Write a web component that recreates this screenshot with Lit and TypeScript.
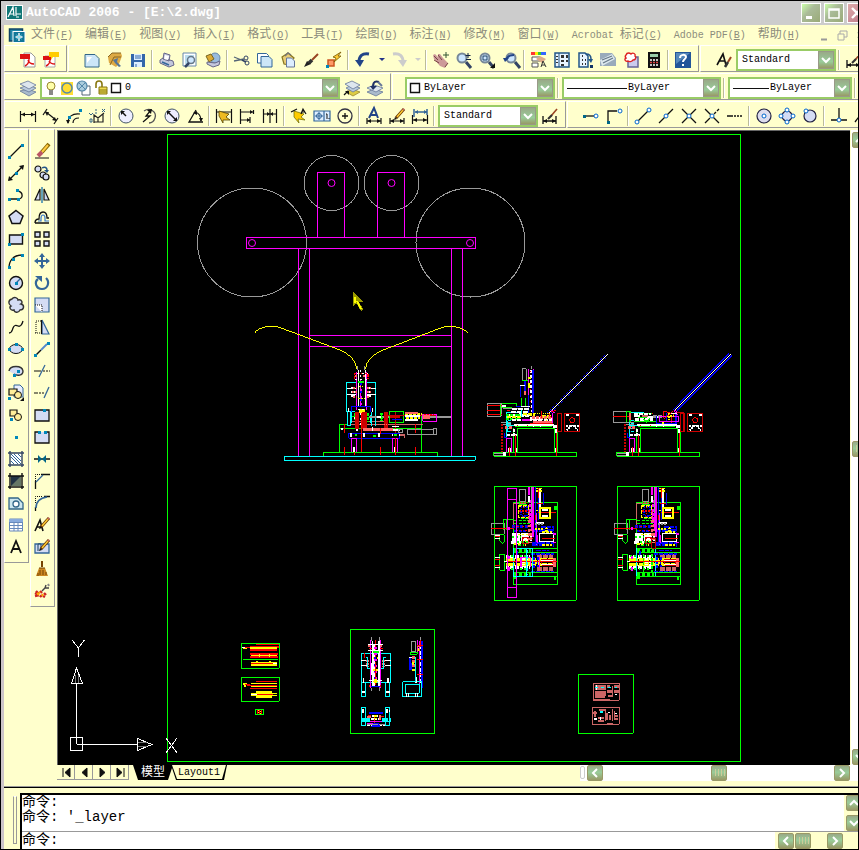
import { LitElement, html, svg, css, nothing } from "lit";
import { customElement } from "lit/decorators.js";

const P = (s: string, d: string, w = 1, f = "none") =>
  svg`<path d=${d} stroke=${s} stroke-width=${w} fill=${f}></path>`;
const F = (f: string, d: string) => svg`<path d=${d} fill=${f} stroke="none"></path>`;
const dot = (x: number, y: number, c = "#0088bb") =>
  svg`<rect x=${x - 1} y=${y - 1} width="3" height="3" fill=${c} stroke="none"></rect>`;
const ring = (x: number, y: number, r: number, s = "#000", f = "none", w = 1) =>
  svg`<circle cx=${x} cy=${y} r=${r} stroke=${s} fill=${f} stroke-width=${w}></circle>`;

const K = "#111";
const B = "#336699";
const G = "#d4dcf4";
const snap = (x: number, y: number) => ring(x, y, 2, "#0066cc", "#fff");
const pencil = [P("#663300", "M15 1L7 10", 3), P("#ffcc33", "M14 2L8 9", 1.5), F("#111", "M5 12l1-3 2 2z"), P("#cc6666", "M14 1l1 1", 2)];
const bolt = [F("#ffcc00", "M3 3l10 3-3 3 4 3-7-1 1 4-5-6z"), P("#666600", "M3 3l10 3-3 3 4 3-7-1 1 4-5-6z", 0.7)];
const lens = (x = 6, y = 6) => [ring(x, y, 4.5, "#778899", "#cce6ff", 2), P("#334466", `M${x + 4} ${y + 4}l5 6`, 3)];
const sheet = F("#cce6f8", "M1 3h10l4 4v8H1z");

const icons: Record<string, unknown> = {
  pdf: [F("#fff", "M2 1h9l4 4v10H4z"), P("#999", "M4 1h7l4 4v10H4z"), F("#dd1111", "M0 2h10v5H0z"), P("#dd1111", "M9 7c0 4-2 6-4 7M8 8c1 3 4 4 6 4", 1.4)],
  pdfmail: [F("#fff", "M2 4h10v11H2z"), P("#aaa", "M2 4h10v11H2z"), F("#dd1111", "M0 4h8v4H0z"), P("#dd1111", "M7 8c0 4-2 5-4 6M6 9c1 2 4 3 6 3", 1.4), F("#ffcc00", "M6 0h10v5h-6l-2 3V5H6z")],
  newdoc: [sheet, P("#336688", "M1 2.500h10l4 4V15H1z", 1), F("#fff", "M3 5h5l-5 6z")],
  open: [F("#ddaa44", "M1 5l4-4h9l1 3-3 8-3 3-7-4z"), P("#886622", "M1 5l4-4h9M3 13l4-8h7", 1), F("#557799", "M6 8l5-2-1 4 4 4-2 1-4-4z")],
  save: [F("#3366aa", "M1 2h14v13H1z"), F("#ddeeff", "M4 2h8v6H4zM4 10h8v5H4z"), P("#3366aa", "M5 4h6M5 6h6M6 12v3", 1)],
  print: [F("#fff", "M5 1l6 2-1 6-6-2z"), P("#666688", "M5 1l6 2-1 6-6-2zM1 8l3-2 10 3 1 4-5 2-9-4z", 1, "#c4c8dd"), P("#336699", "M3 10l7 3", 1.5), F("#fff", "M6 3l4 1-1 4-4-1z")],
  preview: [F("#fff", "M1 1h13v13H1z"), P("#6688aa", "M1 1h13v13H1z"), F("#bbddee", "M3 3h9v9H3z"), ring(9, 8, 3.5, "#667788", "#cce6ff", 1.5), P("#334466", "M7 11l-4 4", 2.5)],
  publish: [ring(10, 6, 5, "#6688aa", "#99bbdd"), F("#ddaa33", "M1 4l5-2 3 5-5 3z"), P("#776622", "M1 4l5-2 3 5-5 3z"), P("#666688", "M2 10l8 1 5-2-1 4-6 2-6-3z", 1, "#c4c8dd")],
  cut: [P("#556677", "M0 5l10 4M0 9l10-2", 1.3), ring(12, 6, 2, "#334466"), ring(13, 11, 2, "#334466"), P("#334466", "M8 8l4 2", 1.5)],
  copy: [P("#336699", "M0.500 1.500h9l2 2V11H0.500z", 1, "#fff"), P("#336699", "M4 4.500h8l3 3V15H4z", 1, "#cce6f8")],
  paste: [P("#887722", "M2 5l6-4 6 5-4 7-6-1z", 1.2, "#e8cc77"), F("#fff", "M7 6h5l3 3v6H7z"), P("#667799", "M6.500 6h5l3 3v6h-8z", 1, "#ddeeff"), P("#777", "M5 4l3-3 3 2", 1.5)],
  brush: [P("#994422", "M15 2L9 8", 2), P("#333", "M9 8l-3 3", 3.5), F("#222", "M1 15l3-6 4 3z")],
  blockedit: [P("#cc5522", "M2 8h6v6H2z", 1.5, "#ff9966"), F("#ffcc33", "M15 0L7 5l3 1-2 4 7-6-3 0z"), P("#775500", "M15 0L7 5l3 1-2 4 7-6-3 0z", 0.8), dot(1, 14)],
  undo: [P("#224488", "M14 2C7 1 4 4 4 10", 3), F("#224488", "M0 8h9l-4 7z")],
  redo: [P("#cccccc", "M2 2c7-1 10 2 10 8", 3), F("#cccccc", "M7 8h9l-4 7z")],
  pan: [F("#cc9999", "M0 3l2-1 3 3 0-3 2 0 3 4 5 5-3 5-5-2-6-7z"), P("#774444", "M1 4l4 4M5 3l4 5M1 8l5 3M12 15l3-4", 1), P("#335533", "M13 0v6M10 3h6", 1)],
  zoomrt: [lens(), P("#112244", "M12 1v5M9.500 3.500h5M10 7.500h5", 1)],
  zoomwin: [lens(), P("#224466", "M4 4h4v4H4z"), F(K, "M16 16h-5l5-5z")],
  zoomprev: [lens(9, 6), P("#224488", "M12 3c-5 0-7 2-8 5", 2), F("#224488", "M1 6h6l-4 4z")],
  props: [F("#ff3333", "M0 0h4v3H0z"), F("#ffee00", "M4 0h3v3H4z"), F("#33cc33", "M7 0h3v3H7z"), F("#3366ff", "M10 0h5v3h-5z"), P("#555", "M1 5h8v4H1zM1 11h6v4H1z", 1, "#fff"), F("#ddaa88", "M5 7l4-3 6 3-4 4z"), P("#333", "M10 15l2-6 3 6M11 13h3", 1)],
  dcenter: [P("#225588", "M1 1h14v14H1z", 1.5, "#e8f4ff"), P("#225588", "M5 1v14", 1), F("#333", "M7 3h3v3H7zM12 3h2v3h-2zM7 8h3v2H7zM12 8h2v2h-2zM7 12h3v2H7zM2 4h2v1H2zM2 7h2v1H2zM2 10h2v1H2z")],
  palettes: [P("#225588", "M2 1h6l3 3v11H2z", 1.5, "#e8f4ff"), P("#333", "M5 4h1M5 8h1M5 12h1M8 8h1M8 12h1", 2), P("#225588", "M9 2c4 0 5 2 5 5", 1.5), F("#225588", "M11 7h5l-2 4z"), dot(14, 14, "#113366")],
  sheetset: [F("#99aabb", "M0 1h12l4 5v8H0z"), F("#dde8ee", "M0 8l12-6 3 5-13 7z"), P("#667788", "M2 8l10-4M3 11l10-5", 1.2)],
  markup: [P("#666699", "M5 5h10v10H5z", 1.5, "#ccccee"), P("#dd2222", "M3 3c1-3 4-2 5-1 2-2 5 0 4 2 2 2 0 4-2 4-1 2-4 2-5 1-3 1-4-2-2-3-1-1-1-2 0-3z", 1.4, "#fff")],
  calc: [F("#111", "M2 0h12v16H2z"), F("#99ccaa", "M4 2h8v3H4z"), P("#fff", "M4 8h8M4 13h8", 1.5), P("#dd4444", "M4 10.500h8", 1.5), P("#111", "M6.500 7v9M9.500 7v9", 1)],
  help: [F("#225599", "M0 0h16v16H0z"), F("#5588bb", "M1 1h14L1 12z"), P("#fff", "M5 6c0-4 6-4 6-1 0 2-3 2-3 5", 2), F("#fff", "M7 12h2v2H7z")],
  textstyle: [P(K, "M1 13L7 2l3 11M3 9h6", 1.6), P("#994422", "M15 5l-3 5", 2), P("#333", "M12 10l-3 5", 2.5)],
  dimstyle: [P(K, "M1 8v8M14 8v8M1 13h13", 1.3), F(K, "M1 13l4-2v4zM14 13l-4-2v4z"), P("#994422", "M15 1L9 8", 1.6), P("#333", "M10 7l-4 4", 2.2)],
  layers: [P("#667799", "M0 11l8-2 8 3-7 4z", 0.8, "#aabbcc"), P("#667799", "M0 8l8-3 8 3-7 4z", 0.8, "#bbccdd"), P("#667799", "M0 4l8-3 8 4-7 4z", 0.8, "#dde6ee")],
  layercur: [P("#998833", "M2 12l6-3 8 3-7 4z", 0.8, "#ddcc44"), P("#667799", "M2 8l6-3 8 3-7 4z", 0.8, "#bbccdd"), P("#667799", "M1 4l7-3 8 4-7 4z", 0.8, "#dde6ee"), P(K, "M0 15l4-4", 1.2), F(K, "M1 11h4v4z")],
  layerprev: [P("#667799", "M0 12l7-3 9 3-7 4z", 0.8, "#aabbcc"), P("#667799", "M0 8l7-3 9 3-7 4z", 0.8, "#dde6ee"), P("#223366", "M12 2C6 0 6 5 6 7", 2), F("#223366", "M3 6h7l-4 4z"), P("#667799", "M11 2l4 4", 2)],
  dlinear: [P(K, "M0.500 3v11M15.500 3v11M1 6.500h14", 1.2), F(K, "M1 6.500l4-2v4zM15 6.500l-4-2v4z")],
  daligned: [P(K, "M4 1L0 7M15 10l-4 6M3 4l10 8", 1.2), F(K, "M2 4l4 0-2 4zM13 13l-4-1 3-3z")],
  darc: [P(K, "M2 15C2 9 6 5 14 6M7 15c0-3 2-5 6-5", 1.2), F(K, "M0 12h4l-2 4z"), dot(14, 2), dot(3, 9)],
  dord: [P("#222", "M5 15V7l4 3 6-5M5 14h9V6M9 10v4", 1.2), P("#336688", "M6 2h2M6 5h2M0 5l2 2 2-2M1 11h2v3H1zM13 1l3 3M16 1l-3 3", 1)],
  dradius: [ring(8, 8, 7, "#445566", "#eef"), P(K, "M4 4l4 4", 1.5), F(K, "M3 3h4L3 7z")],
  djog: [P("#555", "M3 3c6-4 13 1 11 7-1 3-3 5-6 5", 1.3), P(K, "M2 14l7-6-4 0 5-6", 1.3), F(K, "M11 1l-5 1 4 4z")],
  ddia: [ring(8, 8, 7, "#445566", "#eef"), P(K, "M4 4l8 8", 1.5), F(K, "M3 3h4L3 7zM13 13H9l4-4z")],
  dang: [P(K, "M9 2L2 14h14", 1.3), P(K, "M8 4c4 1 6 5 6 9", 1.2), F(K, "M6 5l4-2 0 4zM12 10h4l-2 4z")],
  dquick: [P(K, "M0.500 1v14M15.500 1v14M1 4h14", 1.2), F("#eebb22", "M3 3l10 3-3 3 4 3-7 0 0 3-4-7z"), P("#554400", "M3 3l10 3-3 3 4 3-7 0 0 3-4-7z", 0.8)],
  dbase: [P(K, "M1.500 1v15M14.500 2v4M11 9v6M2 4h12M2 12h9", 1.2), F(K, "M14 4l-3-2v4zM11 12l-3-2v4z")],
  dcont: [P(K, "M1.500 1v14M8 1v14M14.500 1v14M1 6h14", 1.2), F(K, "M8 6L5 4v4zM8 6l3-2v4z")],
  qleader: [bolt, P(K, "M0 4l6-3M10 6l2-5 3 5M11 4h3", 1.2)],
  tol: [P("#336699", "M0 3h16v10H0zM10 3v10", 1.2, "#ddeeff"), ring(5, 8, 2.5, "#336699"), P("#336699", "M1 8h8M5 4v8", 1), P(K, "M12 6h1v5M15 10v1", 1)],
  center: [ring(8, 8, 7, "#334", "none", 1.3), P(K, "M8 5v6M5 8h6", 1.3)],
  dimedit: [P("#224488", "M3 10L8 0l4 10M5 7h6", 2), P(K, "M1 10v6M15 10v6M1 13h14", 1.2), F(K, "M1 13l4-2v4zM15 13l-4-2v4z")],
  dimtedit: [pencil, P(K, "M1 10v6M15 10v6M1 13h14", 1.2), F(K, "M1 13l4-2v4zM15 13l-4-2v4z")],
  dimupd: [P("#336699", "M2 1v8M15 1v6M3 4h12", 1.5), P(K, "M0.500 7v9M15.500 7v9M1 12h14", 1.2), F(K, "M1 12l4-2v4zM15 12l-4-2v4z"), F("#336699", "M3 4l3-2v4zM15 4l-3-2v4z")],
  track: [P(K, "M2 8h9", 1.3), dot(1, 8, "#006688"), snap(13, 8)],
  snapfrom: [P(K, "M2 13V3h9", 1.3), dot(2, 14, "#006688"), snap(14, 3)],
  endp: [P(K, "M2 14L14 2", 1.3), snap(2, 14), snap(14, 2)],
  midp: [P(K, "M1 15L15 1", 1.3), snap(8, 8)],
  inter: [P(K, "M1 1l14 14M1 15L15 1", 1.3), snap(8, 8)],
  appint: [P(K, "M1 1l14 14M1 15l5-5M10 6l2-2M13 3l2-2", 1.3), snap(8, 8)],
  ext: [P(K, "M0 8h6M7 8h2M10 8h2M13 8h2", 1.3)],
  cen: [ring(8, 8, 7, "#224", "#dde", 1.2), snap(8, 8)],
  quad: [ring(8, 8, 5, "#224", G, 1.2), snap(8, 2), snap(8, 14), snap(2, 8), snap(14, 8)],
  tan: [ring(8, 8, 6, "#224", G, 1.2), snap(4, 3)],
  perp: [P(K, "M8 0v11M0 12h16", 1.3), snap(8, 12)],
  par: [P(K, "M1 14L10 2M6 15L15 3", 1.3)],
  line: [P(K, "M2 14L14 2", 1.3), dot(1, 14), dot(14, 2)],
  xline: [P(K, "M1 15L15 1", 1.3), F(K, "M0 16l1-5 4 4zM16 0l-5 1 4 4z"), dot(8, 8)],
  pline: [P(K, "M1 12h9c6 0 5-7 0-8", 1.3), dot(1, 12), dot(10, 12), dot(9, 3)],
  polygon: [P(K, "M8 1.500L15 7l-3 7.500H4L1 7z", 1.5, G)],
  rect: [P(K, "M1.500 4h13v9h-13z", 1.4, G), dot(1, 13), dot(14, 3)],
  arc: [P(K, "M1 15C1 8 5 2 14 2", 1.3), dot(1, 14), dot(5, 6), dot(14, 2)],
  circle: [ring(8, 8, 6.500, K, G, 1.4), P(B, "M8 8l4-4", 1.3), dot(8, 8)],
  cloud: [P("#333", "M4 2c2-3 6-1 6 1 4-1 5 3 3 4 4 1 3 6-1 6-2 4-6 2-6 0-4 1-5-3-3-4-3-2-3-6 1-7z", 1.4, G)],
  spline: [P(K, "M1 14c3 0 3-2 4-5s3-3 5-2 4-1 5-5", 1.3)],
  ellipse: [svg`<ellipse cx="8" cy="8" rx="6.5" ry="4.5" fill=${G} stroke=${K}></ellipse>`, dot(1, 8), dot(8, 3), dot(14, 8)],
  ellarc: [P("#333", "M1 8C2 2 14 2 15 8c0 5-6 5-9 3", 1.4, G), dot(6, 12), dot(10, 8)],
  insert: [P(B, "M6 0h6l3 3v9H6z", 1, "#e8eeff"), P(K, "M1 4h8v6H1z", 1.2, "#ffee99"), ring(10, 10, 3.500, K, "#ffee99"), dot(1, 13), F(K, "M16 16h-4l4-4z")],
  block: [P(K, "M2 3h7v6H2z", 1.2, "#ffee99"), ring(10, 10, 3.500, K, "#ffee99"), dot(3, 12)],
  point: [dot(8, 8)],
  hatch: [F("#fff", "M3 3h10v10H3z"), P(B, "M3 3l10 10M3 6l7 7M6 3l7 7M3 10l3 3M10 3l3 3", 1), P("#334466", "M2 0v16M14 0v16M0 2h16M0 14h16", 1.4)],
  gradient: [F("#667766", "M3 3h10v10H3z"), F("#223344", "M3 3h10L3 13z"), P(K, "M2 0v16M14 0v16M0 3h16M0 14h16", 1.4)],
  region: [P("#336688", "M1 3h9l5 5v6H1z", 1.3, "#cce6ee"), ring(8, 9, 3, "#336688", "#fff", 1.3)],
  table: [P("#6688bb", "M1.500 2h13v12h-13zM1.500 5.500h13M1.500 8.500h13M1.500 11.500h13M6 5v9M10 5v9", 1, "#fff"), F("#88aadd", "M1 2h14v3H1z")],
  mtext: [P(K, "M3 14L8 2l5 12M5 10h6", 1.8)],
  erase: [P(K, "M1 15h14", 1), P("#886600", "M15 1L8 9", 4), P("#ffcc44", "M14 2L8 9", 2), P("#bb5566", "M8 9l-4 4", 4)],
  copyobj: [ring(4, 4, 3, K, G, 1.2), ring(9, 10, 3, K, G, 1.2), ring(12, 12, 3, K, G, 1.2), P("#225588", "M8 3c3-2 5 0 5 2", 1.5), F("#225588", "M10 5h5l-2 3z")],
  mirror: [P(K, "M6 2v11H1zM10 2v11h5z", 1.2, G), P("#0066aa", "M8 0v16", 1.2)],
  offset: [P(K, "M1 14h14M1 14c0-3 2-4 4-4 0-6 2-7 4-7 3 0 4 2 4 6h2", 1.3), P("#3377cc", "M4 12h3V9c0-4 4-4 4 0v3h4", 1.2)],
  array: [P(K, "M1 1h5v5H1zM10 1h5v5h-5zM1 10h5v5H1zM10 10h5v5h-5z", 1.4, G)],
  move: [P(B, "M8 2v12M2 8h12", 2), F(B, "M8 0l3 4H5zM8 16l3-4H5zM0 8l4-3v6zM16 8l-4-3v6z")],
  rotate: [P(B, "M12 3c4 4 2 11-4 11S0 7 4 4", 2.2), F(B, "M1 1h7v6z")],
  scale: [P(B, "M1 1h14v14H1z", 1.2, G), svg`<path d="M1 8h7v7" fill="#fff" stroke="#111" stroke-dasharray="1 1"></path>`],
  stretch: [P(B, "M8 1l7 14H8z", 1.2, G), svg`<path d="M1 14h7M2 14V2h6" fill="none" stroke="#111" stroke-dasharray="1 1"></path>`, P(K, "M7.500 1v14", 1.2)],
  lengthen: [P(K, "M2 14l5-5", 1.4), P("#5588cc", "M7 9l6-6", 1.8), dot(1, 14), dot(14, 2)],
  trim: [P(B, "M11 2L5 14", 1.3), P(K, "M0 8h7M9 8h2M12 8h2M15 8h1", 1.2)],
  extend: [P(B, "M15 2L10 13", 1.3), P(K, "M0 8h4M5 8h2M8 8h2", 1.2)],
  breakpt: [P(K, "M1 3h14v11H1z", 1.3, G), dot(10, 3)],
  brk: [P(K, "M4 3H1v11h14V3h-3", 1.3, G), dot(5, 3), dot(11, 3)],
  join: [P(K, "M0 8h16", 1.5), F("#006688", "M4 4l4 4-4 4zM12 4L8 8l4 4z")],
  chamfer: [P(K, "M7 1.500h9M1.500 8v8", 1.3), P(B, "M2 9l7-7", 1.3), svg`<path d="M1.500 8V1.500H8" fill="none" stroke="#111" stroke-dasharray="1 1"></path>`],
  fillet: [P(K, "M10 1.500h6M1.500 12v4", 1.3), P(B, "M2 13C2 6 6 3 13 2", 1.6), svg`<path d="M1.500 8V1.500H8" fill="none" stroke="#111" stroke-dasharray="1 1"></path>`],
  mtextedit: [P(K, "M1 14L6 3l3 11M3 10h5", 1.6), pencil],
  refedit: [P(B, "M1 5h14v9H1z", 1.3, G), P("#335577", "M4 12V6c0-2 3-2 3 0v5", 1.2), pencil],
  cleanup: [P("#774400", "M8 0v6", 2), F("#cc8822", "M5 7h6l3 8H2z"), P("#774400", "M5 7h6M6 9v5M9 9v5M12 11v3M4 12v3", 1)],
  explode: [P("#cc2222", "M2 8l3 3M1 13l4-1M6 14l2-2M9 13l2 1M6 8l2 2M1 10l2 1M10 10l2 2", 2.4), P("#ffaa00", "M3 10l2 2M8 13l1-2M5 9l1 1", 2), P("#444", "M8 8l3-3 4 0M11 5l1-3", 1.4), P("#888", "M14 1l1 2", 2)],
  acad: [F("#fff", "M0 0h17v15H0z"), F("#117777", "M1 1h15v13H1z"), P("#fff", "M2 12L7 2l1 9M3 9h5M10 2v9M10 9h5M10 12h3", 1.2)],
  mdi: [P("#114466", "M1 1h13v12H1z", 1.5, "#2288aa"), F("#fff", "M4 3h13v12H4z"), F("#117799", "M5 4h11v10H5z"), P("#fff", "M10.500 5v8M7 9h7", 1.4), P("#88ddee", "M8 7l5 4M13 7l-5 4", 1)],
};

const icon = (n: string) => html`<svg class="ic" viewBox="0 0 16 16" aria-hidden="true">${icons[n]}</svg>`;
const tool = (n: string) => html`<button class="tool" type="button" aria-label=${n}>${icon(n)}</button>`;
const drop = (off = false) => html`<button class="drop" type="button" aria-label="more"><svg width="6" height="4">${F(off ? "#cccccc" : "#223388", "M0 0h6L3 3z")}</svg></button>`;
const chev: Record<string, string> = { l: "M9 3L5 7l4 4", r: "M5 3l4 4-4 4", u: "M3 9l4-4 4 4", d: "M3 5l4 4 4-4" };
const sbtn = (d: string) => html`<button class="sb" type="button" aria-label=${"scroll " + d}><svg width="14" height="14">${P("#fff", chev[d], 2)}</svg></button>`;
const thumb = html`<div class="sb"><svg width="14" height="14">${P("#cccc99", "M3.500 3v7M6.500 3v7M9.500 3v7M12.500 3v7", 1)}</svg></div>`;
const combo = (cls: string, label: string, text: string, lead: unknown = nothing) => html`
  <div class="combo ${cls}">${lead}<select aria-label=${label}><option>${text}</option></select>
    <span class="arrow"><svg width="16" height="18">${P("#fff", "M4 7l4 4 4-4", 2)}</svg></span></div>`;
/* "|" stands for a separator inside a tool list */
const tools = (list: string) => list.split(" ").map((n) => (n === "|" ? html`<i class="sep"></i>` : tool(n)));

const layerState = html`<svg class="lead" width="80" height="16" aria-hidden="true">
  ${ring(9, 6, 4, "#998833", "#ffffaa")}${F("#888", "M7 10h4v5H7z")}
  ${F("#ffdd33", "M19 2h12v13H19z")}${ring(25, 8, 5, "#5588aa", "#ffdd33", 1.5)}
  ${P("#556677", "M40 6h8v9h-8z", 1, "#fff")}${ring(40, 6, 5, "#5588aa", "#aaccdd", 1.2)}${P("#5588aa", "M37 3l6 6M43 3l-6 6", 1)}
  ${P("#887711", "M54 8V4c0-4 6-4 6 0v3", 1.6)}${P("#887711", "M57 7h8v7h-8z", 1, "#eedd55")}${P("#887711", "M57 10h8M57 12h8", 1)}
  ${P(K, "M69.500 3.500h9v9h-9z", 1.4, "#fff")}</svg>`;
const swatch = html`<svg class="lead" width="17" height="16" aria-hidden="true">${P(K, "M3.500 3.500h9v9h-9z", 1.4, "#fff")}</svg>`;
const lineSample = (w: number) => html`<svg class="lead" width=${w} height="16" aria-hidden="true">${P(K, `M3 8.500H${w - 1}`, 1)}</svg>`;

/* Drawing entities: one stroke path per CAD colour, in a grid of three units per screen pixel. */
const W = "#fff", GR = "#999999", RD = "#ff0000", DR = "#cc0000", YE = "#ffff00", CY = "#00ffff",
  MG = "#ff00ff", GN = "#00ff00", BL = "#0000ff", SA = "#ff6666", BR = "#cc6666";
type Ent = [string, string, number?, string?];
const part = (x: number, y: number, ents: Ent[]) => svg`<g transform="translate(${x} ${y}) scale(.333333)">
  ${ents.map(([c, d, w = 3, dash]) => svg`<path d=${d} stroke=${c} stroke-width=${w} stroke-dasharray=${dash ?? nothing}></path>`)}</g>`;

const press: Ent[] = [
  [YE, "M46 38q0-6 14-12c20-8 40-9 58-4L300 90q45 18 51 58M683 38q-6-6-18-12c-20-8-40-9-58-4L430 90q-50 20-54 58"],
  [CY, "M133 409H706V421H133Z"],
  [GN, "M298 396V313H322M544 396V313M250 408V397H592V408M300 325H544"],
  [BR, "M330 304H440M330 313H550"],
  [CY, "M319 187H352M319 187V275H345M378 187H407V318M323 275V317H331V275M396 275V318"],
  [W, "M320 205H350M320 223H350M380 205H407M380 223H407M357 150V262M376 150V262"],
  [MG, "M351 155V270M380 155V270M362 180V260", 3],
  [GR, "M375 138V150M352 138V150"],
  [RD, "M344 178V160H384V178", 4, "9 3"],
  [SA, "M346 168H384", 8, "6 18"],
  [W, "M350 162H384M346 178H380M363 150V180", 3, "6 9"],
  [W, "M340 200V232M388 200V232", 12, "6 6"],
  [SA, "M338 203H352M336 215H352M338 230H352M380 205H392M380 217H392M380 230H390", 6, "6 3"],
  [GN, "M354 186H372", 6], [BL, "M363 190V262", 6, "6 18"], [YE, "M357 200H370M353 236H376", 5, "6 3"],
  [MG, "M363 206V260", 7, "6 15"], [YE, "M356 272H374", 12], [W, "M354 268H376", 4, "6 6"],
  [BL, "M334 275V259H392V275"], [W, "M326 264V276M398 264V276", 5],
  [GN, "M344 278V300M385 278V305M336 290H352", 5, "9 3"],
  [DR, "M352 276V326M374 276V326", 13], [W, "M363 280V320M344 290V300", 4, "6 9"],
  [CY, "M336 310V275M392 310V285", 3], [GR, "M386 291H448M545 291H634", 5],
  [GN, "M448 274H490V307H448ZM424 278V302M544 280V313", 4], [GN, "M426 280V303", 9, "6 4"],
  [DR, "M438 276V328", 13], [DR, "M466 276V340M445 288H590", 3], [DR, "M450 290H480", 7],
  [W, "M410 291H422M495 288H540M495 300H535", 4], [BL, "M455 300H485M495 292H540"],
  [YE, "M496 282H545M498 294H540", 6, "9 3"], [SA, "M496 278H535", 6], [SA, "M545 290H570", 14],
  [MG, "M548 304V285H590V304Z"], [RD, "M553 284H582", 3, "6 3"],
  [SA, "M370 328H460", 10], [SA, "M385 315H440", 3, "3 3"],
  [BL, "M326 340H480V355H326Z"], [W, "M334 340V350M372 340V350M417 340V350M458 342V348M478 345H490", 5],
  [GN, "M344 346H352M400 347H408M463 346H470", 6], [MG, "M334 396V355H349V396M457 396V355H472V396"],
  [RD, "M313 313V340M313 381V406M421 325V343M421 381V406M526 313V340M526 381V406M364 280V397M343 395V406M466 355V406"],
  [W, "M342 382V396M464 382V396M303 328H310M349 330H354M398 322V334M455 320H478M458 330H480", 5],
  [GR, "M502 329H580V343H502ZM580 325H590V343H580ZM475 330H488V338H475Z"],
  [BR, "M480 345H494V355", 4],
];
const stand = (x: number): Ent[] => [
  [GN, `M${x - 60} 322H${x + 188}V334H${x - 60}ZM${x - 2} 320V250M${x + 10} 320V250M${x + 121} 320V250M${x + 130} 320V250M${x + 10} 250H${x + 121}`],
  [GR, `M${x - 38} 236V240H${x - 10}M${x - 38} 234H${x - 10}M${x - 60} 325H${x - 30}V331H${x - 60}`],
  [DR, `M${x - 36} 238V320`, 8, "6 3"],
  [CY, `M${x - 22} 280V202H${x + 20}M${x - 22} 243H${x}`],
  [CY, `M${x - 14} 225V262`, 10, "4 4"],
  [SA, `M${x - 27} 248H${x - 6}`, 10, "9 3"],
  [W, `M${x - 22} 270H${x + 8}M${x} 252V275`, 7, "9 4"],
  [BL, `M${x - 28} 265V278H${x - 20}`],
  [MG, `M${x - 22} 320V280H${x - 6}V320`],
  [W, `M${x - 14} 308V322M${x + 6} 308V322M${x + 126} 308V322M${x - 28} 322V334`, 8],
  [RD, `M${x - 14} 306V334M${x + 5} 270V334M${x + 127} 260V334`],
  [W, `M${x} 240H${x + 120}`, 4], [RD, `M${x + 10} 240V246M${x + 40} 240V246`],
  [GN, `M${x + 2} 246H${x + 115}`], [W, `M${x + 60} 245V240M${x + 80} 245V240`],
  [W, `M${x + 118} 244H${x + 133}M${x + 126} 252V265`, 8],
  [DR, `M${x + 132} 205H${x + 142}V260H${x + 132}ZM${x + 152} 205H${x + 198}V260H${x + 152}Z`],
  [RD, `M${x + 175} 216l8 7-4 10-9 0-4-10z`],
  [W, `M${x + 156} 210H${x + 164}M${x + 186} 210H${x + 194}`, 6],
  [W, `M${x + 156} 244H${x + 170}L${x + 158} 256M${x + 194} 244H${x + 180}L${x + 192} 256`, 5, "6 3"],
];
const sideA: Ent[] = [
  ...stand(102),
  [W, "M382 28L205 205", 3], [BL, "M378 26L200 204M386 32L212 206", 3, "3 3"],
  [GR, "M22 175H64V214H22ZM127 72H139V106H127ZM156 63V72"], [RD, "M22 181H75M22 208H66M22 196H62M80 196H90"],
  [GN, "M62 176V214M66 176H110V184M66 188H95M127 106H145M124 160V185M136 160V185", 4],
  [W, "M65 184H78", 6], [MG, "M146 72V205M160 72V205", 4], [BL, "M158 75V205", 6],
  [BL, "M122 122V155M135 108V150M108 184H122M145 150V205", 4], [W, "M153 75V160M155 165V200", 5, "9 6"],
  [RD, "M152 78V190", 5, "4 14"], [YE, "M145 98H154M148 115V130", 6], [W, "M120 122H135M124 185H150", 5],
  [SA, "M136 138V150", 6], [GR, "M70 192H120"], [W, "M95 192H150M92 200H145M120 205V215", 6, "15 3"],
  [W, "M80 212H150M150 222H215", 9, "10 4"],
  [GN, "M118 206V230M78 210H120M78 222H120", 5, "9 4"], [YE, "M82 216H125M130 209H165M185 215H215", 7, "12 3"],
  [W, "M95 226H215M125 212H150", 5, "12 4"], [SA, "M155 218H218", 10, "9 3"], [YE, "M165 206H212M200 218V228", 5, "3 3"],
  [RD, "M150 235H218M184 198V220M205 205L215 218"], [SA, "M158 230H218", 6], [CY, "M82 228V262M126 195V215"],
  [MG, "M216 195L224 205M218 205V235M126 225H150", 5], [RD, "M214 200L228 196", 3],
];
const sideB: Ent[] = [
  ...stand(471),
  [W, "M751 28L584 196"], [BL, "M747 26L580 194M755 32L590 197", 4],
  [GR, "M400 199H440V232H400ZM412 199H438"], [RD, "M400 214H448M462 206H520M550 200V220M575 215V236"],
  [GN, "M440 199V232M440 200H450V232M462 205H515M475 218H545M462 230H530", 4], [W, "M462 207H512M465 224H520", 7, "12 3"],
  [W, "M462 214H480M500 216H545", 5], [BR, "M485 214H505", 7], [GN, "M490 222l10 8 10-8", 5],
  [GR, "M520 214H550", 8, "12 3"], [SA, "M450 205V225", 5], [BL, "M530 236V214M530 236H585M560 204V232M588 204V236", 5],
  [MG, "M538 214H596V229H538Z"], [YE, "M560 212H582M548 232V240M567 204V225", 6, "6 3"],
  [RD, "M550 198L582 208M552 222L580 198"], [MG, "M582 196L592 204M592 200V215", 5, "4 2"], [W, "M572 206H590", 4], [DR, "M590 202H610V262"],
];
const plan = (x: number, left: boolean): Ent[] => [
  [GN, `M${x} 19H${x + 246}V361H${x}Z`],
  [GN, `M${x + 57} 67H${x + 190}V313H${x + 57}ZM${x + 57} 205H${x + 190}M${x + 57} 217H${x + 190}M${x + 57} 277H${x + 190}M${x + 57} 289H${x + 190}`],
  [GN, `M${x + 181} 78V89M${x + 185} 78V89M${x + 60} 295H${x + 68}M${x + 181} 290V300`, 6],
  [BR, `M${x + 57} 70V135M${x + 57} 70H${x + 95}`],
  [GR, `M${x - 9} 130H${x + 30}V163H${x - 9}ZM${x + 75} 28H${x + 93}V65H${x + 75}Z`],
  [GN, `M${x + 27} 120H${x + 60}M${x + 27} 120V150M${x + 36} 120V150M${x + 16} 165H${x + 30}V185L${x + 24} 190L${x + 16} 184ZM${x + 16} 223H${x + 31}V271H${x + 16}ZM${x + 76} 62V75H${x + 98}`],
  [W, `M${x + 2} 166H${x + 16}M${x + 2} 175H${x + 16}M${x + 2} 232H${x + 16}M${x + 2} 264H${x + 16}M${x + 30} 246H${x + 60}`],
  [RD, `M${x - 9} 145H${x + 60}M${x + 2} 170H${x + 16}M${x + 2} 238H${x + 16}M${x + 2} 258H${x + 16}`],
  // solid bodies below the finer parts
  [W, `M${x + 52} 164H${x + 114}M${x + 52} 176H${x + 114}`, 12, "24 4"],
  [W, `M${x + 34} 230H${x + 106}M${x + 34} 262H${x + 106}`, 12, "11 3"],
  [YE, `M${x + 34} 238H${x + 176}M${x + 34} 254H${x + 176}`, 9, "28 4"],
  [BR, `M${x + 128} 227H${x + 176}M${x + 128} 267H${x + 176}`, 12, "14 4"],
  [GN, `M${x + 60} 212H${x + 110}M${x + 60} 283H${x + 110}`, 9, "8 7"],
  [BL, `M${x + 112} 152H${x + 176}M${x + 112} 192H${x + 160}`, 10, "18 5"],
  [YE, `M${x + 72} 78H${x + 103}V112H${x + 72}Z`, 4, "12 3"],
  [BL, `M${x + 80} 82H${x + 98}V108H${x + 80}Z`, 5, "4 4"],
  [RD, `M${x + 76} 68H${x + 104}M${x + 88} 80V112M${x + 74} 94H${x + 106}`, 5, "5 4"],
  [GN, `M${x + 60} 122H${x + 104}M${x + 60} 130H${x + 110}M${x + 80} 116H${x + 104}`, 4, "9 4"],
  [BL, `M${x + 52} 140H${x + 104}M${x + 60} 153H${x + 96}`, 7, "9 4"],
  [RD, `M${x + 55} 140H${x + 116}M${x + 65} 152H${x + 110}M${x + 84} 176H${x + 116}`, 4, "5 9"],
  [W, `M${x + 50} 188H${x + 80}`, 8, "14 5"],
  [GN, `M${x + 52} 172H${x + 80}M${x + 68} 186H${x + 108}M${x + 72} 196H${x + 90}`, 5, "7 6"],
  [YE, `M${x + 72} 164H${x + 106}M${x + 60} 192H${x + 80}M${x + 94} 180V200`, 4, "7 4"],
  [DR, `M${x + 84} 172H${x + 104}V190H${x + 84}Z`, 3],
  [SA, `M${x + 104} 95V190M${x + 110} 120V188`, 5, "8 5"],
  [MG, `M${x + 104} 20V45M${x + 117} 22V170M${x + 124} 100V195`, 6],
  [MG, `M${x + 114} 24V150`, 9], [MG, `M${x + 108} 60V130`, 5, "9 4"],
  [GR, `M${x + 112} 20V100`], [W, `M${x + 104} 48V65M${x + 138} 25V115M${x + 125} 130H${x + 148}`, 7],
  [YE, `M${x + 124} 26H${x + 146}M${x + 124} 34H${x + 146}M${x + 124} 92H${x + 140}`, 5, "8 3"],
  [BL, `M${x + 124} 20V195M${x + 133} 38V120M${x + 148} 38V75`, 4], [RD, `M${x + 133} 24V55M${x + 128} 70H${x + 145}M${x + 132} 99H${x + 185}M${x + 125} 105V120`],
  [YE, `M${x + 138} 84H${x + 168}V115H${x + 138}Z`, 5], [W, `M${x + 142} 90H${x + 160}M${x + 142} 109H${x + 162}`, 5],
  [GR, `M${x + 122} 133H${x + 148}`, 6, "5 4"], [YE, `M${x + 122} 147H${x + 145}M${x + 156} 141V160`, 8, "6 3"],
  [BL, `M${x + 140} 142H${x + 178}V200M${x + 120} 190H${x + 178}M${x + 125} 212H${x + 165}`, 5, "14 3"],
  [W, `M${x + 135} 162H${x + 178}V186H${x + 135}Z`], [YE, `M${x + 142} 156H${x + 172}M${x + 142} 196H${x + 172}`, 6, "9 4"],
  [RD, `M${x + 142} 175H${x + 182}`],
  [MG, `M${x + 130} 165V190M${x + 176} 163H${x + 186}M${x + 176} 188H${x + 186}`, 5],
  [CY, `M${x + 57} 205V289M${x + 115} 205V289`],
  [BL, `M${x + 68} 212V225M${x + 110} 222H${x + 178}M${x + 110} 275H${x + 178}`, 5, "12 3"],
  [GN, `M${x + 38} 228H${x + 96}M${x + 38} 268H${x + 96}`, 5, "5 8"],
  [YE, `M${x + 80} 246H${x + 110}`, 8, "17 4"],
  [W, `M${x + 88} 235V260M${x + 98} 228V268`, 7, "5 3"],
  [BL, `M${x + 118} 230V265M${x + 130} 232V262`, 6, "9 3"], [YE, `M${x + 122} 246H${x + 140}`, 12, "6 4"],
  [SA, `M${x + 181} 235V260`, 9], [DR, `M${x + 142} 238H${x + 175}V256H${x + 142}Z`], [RD, `M${x + 38} 246H${x + 188}`],
  [W, `M${x + 140} 241H${x + 176}M${x + 140} 253H${x + 176}`, 3], [MG, `M${x + 44} 228V238M${x + 44} 262V272M${x + 44} 140V150`, 6],
  ...(left ? ([
    [MG, `M${x + 39} 26H${x + 67}V352H${x + 39}ZM${x + 39} 58H${x + 67}M${x + 39} 322H${x + 67}`],
    [CY, `M${x + 67} 205H${x + 115}V289H${x + 57}M${x + 98} 205V289`],
    [MG, `M${x + 80} 232H${x + 108}V262M${x + 80} 232V262M${x + 136} 232V265`, 4], [CY, `M${x + 98} 210V285`, 6, "9 9"],
  ] as Ent[]) : ([[GN, `M${x + 78} 210V280M${x + 104} 210V280`, 4, "9 3"], [DR, `M${x + 104} 175H${x + 115}V205H${x + 104}Z`]] as Ent[])),
];
const details: Ent[] = [
  [GN, "M34 70H148V145H34ZM38 118H145M34 172H148V244H34ZM76 268H100V284H76ZM361 28H614V340H361Z"],
  [RD, "M78 74H146M60 81H148M60 90H142M60 103H145M60 112H145M78 185H140M50 197H142M60 206H140", 5],
  [YE, "M60 84H142M62 106H140M62 127H142M62 135H142M62 191H142M62 200H140M62 220H142M62 227H142", 4],
  [YE, "M38 85H50M42 80V88M40 192H52M46 188V200M82 124V136M120 124V136M82 217H122V230H82Z", 6],
  [RD, "M42 84H60M62 131H130M76 224H130M44 193H60", 3], [W, "M36 83H44M64 224H80M130 131H142", 5],
  [YE, "M88 102V110M118 102V110M90 80V88M128 80V88", 3], [RD, "M82 276H96", 10, "3 3"], [YE, "M86 270V282M92 272V282", 3, "3 3"],
  // front elevation
  [CY, "M394 100H482V188H394ZM394 188V230H407V188M466 188V230H480V188"],
  [W, "M394 122H412M394 136H412M464 122H482M464 136H482M400 174V190M474 174V190M396 216H406M468 216H480", 4],
  [MG, "M422 60V205M451 60V205", 5], [W, "M427 62V200M447 62V200M432 75V200", 4], [GR, "M425 50V62M448 50V62"],
  [SA, "M415 78H424M450 78H460M412 120V142M461 120V142", 8, "6 3"], [RD, "M418 86H426M450 86H458M403 100V115M436 60V110", 4],
  [W, "M415 74H460M415 92H458", 3], [GN, "M428 97H448", 5], [MG, "M436 80V190", 8, "6 12"],
  [YE, "M430 115H444M426 151H448M430 184H444", 5, "9 3"], [BL, "M436 112V180", 6, "5 15"],
  [RD, "M436 125V195M420 195V200M452 195V200", 3], [W, "M418 182H456M426 130V165M446 130V165", 5], [YE, "M436 178V190", 8],
  [CY, "M407 112H412V145H420M452 145H462V112H468"], [BL, "M424 200H450"], [GR, "M425 205V212M449 205V212"],
  // side elevation
  [GR, "M544 64H556V96H544ZM572 50V66"], [BL, "M576 64V205M540 112V150M545 128V150", 5], [MG, "M568 64V205M562 60V100", 4],
  [W, "M572 75V195M538 112H556M556 160V190", 4, "12 5"], [SA, "M565 74V92M550 108V140", 9, "8 4"], [GN, "M541 97H562V103H541Z"],
  [RD, "M560 76H578M560 118H578M560 163H578M571 60V80"], [YE, "M546 151H558M550 126V136M566 84V92", 5],
  [CY, "M519 184H575V230H517V186M526 220V193H568V220ZM556 110V185"], [W, "M530 220V230M536 220V230M556 220V230M562 220V230M560 172V188", 3],
  // plan view
  [CY, "M394 262H407V317H394ZM466 262H480V317H466ZM394 305H482"], [W, "M396 274H406M468 274H480M400 266V278M472 266V278", 5, "6 3"],
  [CY, "M396 300H420M455 300H482", 10, "9 2"], [RD, "M414 286H424M450 290H462M420 280H455M434 285V312", 4], [BL, "M418 280H458M424 318H450", 5],
  [W, "M426 288H448M424 296H450M412 314H426M450 314H464", 6, "7 3"], [YE, "M436 286V298", 10, "6 3"], [MG, "M420 304H455M410 312H430", 4],
  [SA, "M412 290H422M450 284V300", 6], [GR, "M412 314H466"], [BL, "M428 310H446V318", 4],
];
const sheets: Ent[] = [
  [GN, "M55 43H220V220H55Z"], [BR, "M100 70H178V121H100ZM97 142H178V193H97Z"],
  [BR, "M106 80H138M106 88H138M106 104H138M106 110H136M142 80H150M142 95H158M163 80H176M163 95H176M145 108H158", 7],
  [BR, "M106 96H138M158 78V112M102 119H150", 5], [W, "M110 75V90M122 82H132M165 104H172", 4], [CY, "M106 82H114M124 82H132M144 82H152M165 82H172", 3],
  [BR, "M104 152V170M114 175H132M114 182H132M142 160V180M150 166V180M164 168H174M164 176H174M100 158H112", 6],
  [BR, "M136 146V184M158 146V184M116 150H134M164 154V180M140 190H158", 4], [W, "M102 177H112M144 157H150M165 160H172M121 170V180", 4], [CY, "M120 156H130", 7],
];

const drawing = svg`<g transform="translate(-58 -131)" fill="none" shape-rendering="crispEdges">
  <path stroke=${GN} d="M167.500 134.500H740.500V761.500H167.500Z"></path>
  <g stroke=${GR}><circle cx="252" cy="242.5" r="54.5"></circle><circle cx="470.500" cy="242.5" r="54.5"></circle>
    <circle cx="331.500" cy="183" r="27.5"></circle><circle cx="391.500" cy="183" r="27.5"></circle></g>
  <path stroke=${MG} d="M317.500 237V172.500H344.500V237M377.500 237V172.500H404.500V237M246.500 237.500H475.500V248.500H246.500ZM298.500 248V456M309.500 248V456M451.500 248V456M462.500 248V456M309 335.500H451M309 346.500H451"></path>
  <g stroke=${MG} shape-rendering="auto"><circle cx="331.500" cy="183" r="3.5"></circle><circle cx="391.500" cy="183" r="3.5"></circle>
    <circle cx="252" cy="243" r="3.5"></circle><circle cx="470" cy="243" r="3.5"></circle></g>
  ${part(240, 320, press)}${part(480, 345, sideA)}${part(480, 345, sideB)}
  ${part(485, 480, plan(28, true))}${part(485, 480, plan(397, false))}
  ${part(230, 620, details)}${part(560, 660, sheets)}
  <path fill="#999900" d="M353 292V306L356 303L361 311L363 309L359 302H363Z"></path><path stroke=${YE} stroke-width="2" d="M355 297V303M357 301L361 309"></path>
  <g stroke="#fff"><path d="M70.500 737.500H82.500V750.500H70.500ZM76.500 744V683M76.500 744.500H137M71.500 683.500H82.500L76.500 668ZM137.500 738.500V750.500L152 744.500ZM72 640L78.500 648M84.500 640L78.500 648V657M166 738L177 753M177 738L166 753"></path>
    <path stroke="#777" d="M75.500 675V683M78.500 675V683M138 742.500H147M138 746.500H147"></path></g>
</g>`;

const menus: [string, string, string][] = [
  ["", "文件", "F"], ["", "编辑", "E"], ["", "视图", "V"], ["", "插入", "I"], ["", "格式", "O"], ["", "工具", "T"],
  ["", "绘图", "D"], ["", "标注", "N"], ["", "修改", "M"], ["", "窗口", "W"], ["Acrobat ", "标记", "C"], ["Adobe PDF", "", "B"], ["", "帮助", "H"],
];

@customElement("app-root")
export class AppRoot extends LitElement {
  static styles = css`
    :host { display: block; height: 100vh; min-height: 400px; overflow: hidden;
      font: 10px/14px "Liberation Mono", "Noto Sans CJK SC", monospace; color: #000; }
    * { box-sizing: border-box; }
    button, select, input { font: inherit; color: inherit; margin: 0; padding: 0; border: 0; background: none; border-radius: 0; }
    svg { display: block; flex: none; }
    .window { height: 100%; display: flex; flex-direction: column; border: 1px solid #000; background: #ffffcc; overflow: hidden; }
    .title { flex: none; height: 24px; display: flex; align-items: center; gap: 4px; padding-left: 5px; background: #cccccc; color: #fff;
      font-size: 13px; font-weight: bold; }
    .title h1 { font: inherit; margin: 0; flex: 1; white-space: pre; }
    .title .ic { width: 16px; height: 16px; }
    .winbtns { display: flex; gap: 3px; margin-right: -9px; }
    .winbtn { width: 20px; height: 20px; border: 1px solid #fff; background: linear-gradient(135deg, #ccffaa, #aabb99 40%, #99aa77); }
    .close { background: linear-gradient(135deg, #ddaaaa, #bb7788); }
    .frame { flex: 1; min-height: 0; display: flex; flex-direction: column; border-left: 3px solid #ccc4c8; }
    .menu { flex: none; height: 19px; display: flex; align-items: center; gap: 12px; padding: 2px 0 0 4px; color: #8c8c7c; white-space: pre; }
    .menu .ic { width: 17px; height: 16px; margin-right: -6px; }
    .menu b { font-weight: normal; font-size: 12px; }
    .mdi { margin-left: 8px; display: flex; gap: 2px; }
    .bars { flex: none; display: grid; gap: 1px; padding-top: 1px; }
    .bar { height: 27px; display: flex; gap: 1px; }
    .seg { display: flex; align-items: center; padding: 3px 4px 0 11px; border: 1px solid #fff; border-right-color: #999; border-bottom-color: #999; flex: none; }
    .seg:last-child { flex: 1 0 0; min-width: 0; overflow: hidden; }
    .ic { width: 16px; height: 16px; overflow: visible; }
    .tool { width: 23px; height: 22px; padding: 0 3px 0 4px; flex: none; }
    .drop { width: 13px; height: 22px; padding-left: 5px; flex: none; }
    .sep { flex: none; width: 2px; height: 20px; margin: 0 2px; border-left: 1px solid #bbbb99; border-right: 1px solid #fff; }
    .combo { flex: none; width: 100px; height: 22px; margin-left: 1px; display: flex; align-items: center; border: 2px solid #99cc66; background: #fff; }
    .combo select { flex: 1; min-width: 0; height: 18px; padding-left: 4px; appearance: none; outline: none; }
    .combo .lead + select { padding-left: 0; }
    .combo.layer .lead + select { padding-left: 3px; }
    .layer { width: 300px; }
    .color { width: 150px; }
    .ltype { width: 159px; }
    .lweight { width: 124px; }
    .arrow { width: 16px; height: 18px; flex: none; background: linear-gradient(#99aa88, #99cc99 60%, #999966); border: 1px solid #998; pointer-events: none; }
    .arrow svg { margin: -1px; }
    .work { flex: 1; min-height: 0; display: flex; padding-top: 1px; }
    .side { flex: none; align-self: flex-start; width: 25px; margin-right: 1px; padding: 10px 0 4px 3px; display: flex; flex-direction: column;
      border: 1px solid #fff; border-right-color: #999; border-bottom-color: #999; }
    .side .tool { width: 20px; height: 22px; padding: 0; }
    .view { flex: 1; min-width: 0; display: flex; flex-direction: column; padding: 1px 0 0 1px; }
    .sheet { flex: 1; min-height: 0; display: flex; }
    .canvas { flex: 1; min-width: 0; overflow: hidden; background: #000; border: 1px solid #666; border-width: 1px 0 0 1px; }
    .canvas svg { width: 100%; height: 100%; }
    .vbar { flex: none; width: 8px; overflow: hidden; display: flex; flex-direction: column; justify-content: space-between;
      padding: 2px 0 0 1px; border-left: 1px solid #ffffcc; background: #fff; }
    .sb { flex: none; width: 16px; height: 16px; border: 1px solid #999966; border-radius: 2px; background: linear-gradient(#99aa88, #99cc99 45%, #999966); }
    .tabs { flex: none; height: 16px; display: flex; background: #ffffcc; }
    .nav { width: 18px; height: 15px; border: 1px solid #999; border-width: 0 1px 1px 0; padding: 0 5px; }
    .tab { height: 15px; width: 56px; position: relative; margin-left: -2px; background: #000; clip-path: polygon(0 0, 100% 0, 53px 100%, 5px 100%); }
    .tab::before { content: ""; position: absolute; inset: 0 1px 1px 1px; background: #ffffcc; clip-path: polygon(0 0, 100% 0, 50px 100%, 5px 100%); }
    .tab span { position: relative; }
    .tab.on { width: 40px; margin-left: 4px; color: #fff; font-size: 12px; clip-path: polygon(0 0, 100% 0, 35px 100%, 5px 100%); }
    .tab.on::before { display: none; }
    .hbar { margin-left: auto; width: 278px; max-width: 50%; display: flex; justify-content: space-between; padding-right: 8px; background: #fff; }
    .split { width: 5px; height: 13px; border: 1px solid #ccc; border-radius: 2px; margin: 1px 2px 0 0; }
    .start { display: flex; }
    .rule { flex: none; height: 2px; margin-top: 5px; background: #000; border-top: 1px solid #999; }
    .command { flex: none; height: 61px; padding-left: 9px; display: flex; gap: 3px; }
    .grip { width: 4px; margin: 8px 0 5px; border: 1px solid #999; border-top-color: #fff; border-bottom-color: #999; }
    .console { flex: 1; min-width: 0; margin-top: 5px; display: flex; flex-direction: column; background: #fff; border: 2px solid #000; border-width: 2px 0 0 2px;
      font-size: 14px; line-height: 15px; white-space: pre; }
    .history { flex: 1; display: flex; justify-content: space-between; border-bottom: 1px solid #999; }
    .history p { margin: 0; }
    .cbar { flex: none; width: 14px; padding-left: 2px; display: flex; flex-direction: column; justify-content: space-between; background: #ffffcc; }
    .prompt { flex: none; height: 17px; display: flex; align-items: center; }
    .prompt input { flex: 1; min-width: 0; height: 16px; outline: none; }
    .pbar { flex: none; width: 83px; height: 17px; display: flex; align-items: center; gap: 1px; padding: 0 15px 0 3px; background: #ffffcc; }
    .pbar .sb:last-child { margin-left: auto; }
  `;

  render() {
    const navs = ["M1 3v9M8 3v9L3 7.500z", "M7 3v9L2 7.500z", "M2 3v9L7 7.500z", "M1 3v9L6 7.500zM8 3v9"];
    return html`
      <main class="window">
        <header class="title">${icon("acad")}<h1>AutoCAD 2006 - [E:\\2.dwg]</h1>
          <div class="winbtns">
            <button class="winbtn" type="button" aria-label="minimize"><svg width="18" height="18">${P("#fff", "M4 13.500h6", 3)}</svg></button>
            <button class="winbtn" type="button" aria-label="maximize"><svg width="18" height="18">${P("#fff", "M4 5h10v9H4zM4 6h10", 1.5)}</svg></button>
            <button class="winbtn close" type="button" aria-label="close"><svg width="18" height="18">${P("#fff", "M4 4l10 10M14 4L4 14", 2.4)}</svg></button>
          </div>
        </header>
        <div class="frame">
          <nav class="menu">${icon("mdi")}
            ${menus.map(([pre, zh, key]) => html`<button type="button">${pre}<b>${zh}</b>(<u>${key}</u>)</button>`)}
            <div class="mdi" aria-hidden="true"><svg width="14" height="16">${P("#999", "M1 11.500h6", 2)}</svg><svg width="16" height="16">${P("#aaa", "M2 6h6v6H2zM4 6V3h7v6H8", 1)}</svg><svg width="10" height="16">${P("#999", "M4 4l6 6M10 4l-6 6", 2)}</svg></div>
          </nav>
          <div class="bars">
            <div class="bar">
              <div class="seg">${tools("pdf pdfmail")}</div>
              <div class="seg">${tools("newdoc open save | print preview publish | cut copy paste brush blockedit | undo")}${drop()}${tools("redo")}${drop(true)}${tools("| pan zoomrt zoomwin zoomprev | props dcenter palettes sheetset markup calc | help")}</div>
              <div class="seg">${tools("textstyle")}${combo("", "Text style", "Standard")}${tools("| dimstyle")}</div>
            </div>
            <div class="bar">
              <div class="seg">${tools("layers")}${combo("layer", "Layer", "0", layerState)}${tools("layercur layerprev")}</div>
              <div class="seg">${combo("color", "Color", "ByLayer", swatch)}<i class="sep"></i>${combo("ltype", "Linetype", "ByLayer", lineSample(64))}<i class="sep"></i>${combo("lweight", "Lineweight", "ByLayer", lineSample(40))}<i class="sep"></i></div>
            </div>
            <div class="bar">
              <div class="seg">${tools("dlinear daligned darc dord | dradius djog ddia dang | dquick dbase dcont | qleader tol center | dimedit dimtedit dimupd |")}${combo("", "Dimension style", "Standard")}${tools("dimstyle")}</div>
              <div class="seg">${tools("track snapfrom | endp midp inter appint ext | cen quad tan | perp par")}</div>
            </div>
          </div>
          <section class="work">
            <div class="side">${tools("line xline pline polygon rect arc circle cloud spline ellipse ellarc insert block point hatch gradient region table mtext")}</div>
            <div class="side">${tools("erase copyobj mirror offset array move rotate scale stretch lengthen trim extend breakpt brk join chamfer fillet mtextedit refedit cleanup explode")}</div>
            <div class="view">
              <div class="sheet">
                <div class="canvas"><svg role="img" aria-label="Model space">${drawing}</svg></div>
                <div class="vbar">${sbtn("u")}${thumb}${sbtn("d")}</div>
              </div>
              <div class="tabs">
                ${navs.map((d) => html`<button class="nav" type="button" aria-label="tab"><svg width="9" height="15">${P(K, d, 1, K)}</svg></button>`)}
                <button class="tab on" type="button"><span>模型</span></button>
                <button class="tab" type="button"><span>Layout1</span></button>
                <div class="hbar"><div class="start"><i class="split"></i>${sbtn("l")}</div>${thumb}${sbtn("r")}</div>
              </div>
            </div>
          </section>
          <div class="rule"></div>
          <section class="command">
            <i class="grip"></i>
            <div class="console">
              <div class="history"><div><p>命令:</p><p>命令: '_layer</p></div><div class="cbar">${sbtn("u")}${sbtn("d")}</div></div>
              <div class="prompt"><label for="cmd">命令:</label><input id="cmd" type="text" /><div class="pbar">${sbtn("l")}${thumb}${sbtn("r")}</div></div>
            </div>
          </section>
        </div>
      </main>`;
  }
}
